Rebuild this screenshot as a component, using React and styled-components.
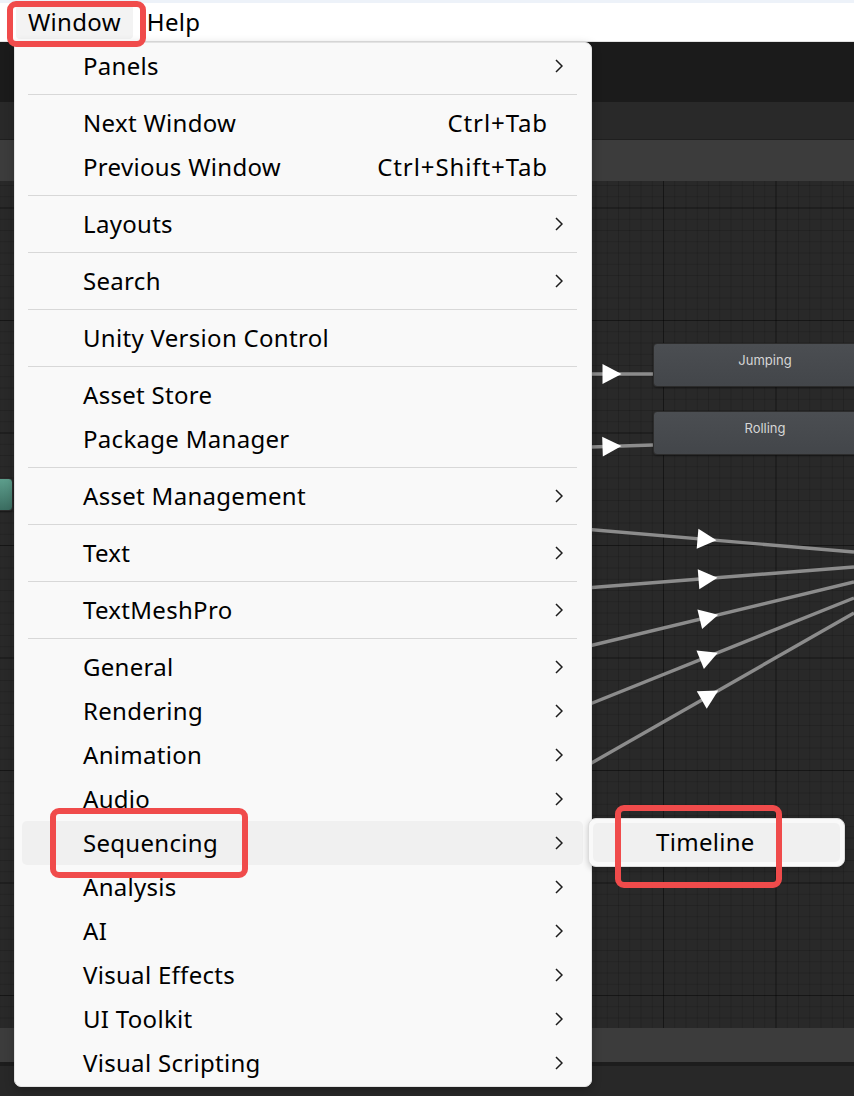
import React from 'react';
import styled, { createGlobalStyle } from 'styled-components';

const GlobalStyle = createGlobalStyle`
  html, body { margin: 0; padding: 0; background: #282828; }
  body { font-family: "Noto Sans", "Noto Sans CJK SC", sans-serif; }
  * { box-sizing: border-box; }
`;

const Screen = styled.div`
  position: relative;
  width: 854px;
  height: 1096px;
  overflow: hidden;
  display: flex;
  flex-direction: column;
  font-family: "Noto Sans", "Noto Sans CJK SC", sans-serif;
`;

const TopBar = styled.div`
  height: 42px;
  flex: none;
  display: flex;
  align-items: center;
  gap: 2px;
  padding-left: 16px;
  background: #ffffff;
  border-top: 3px solid #edf2f9;
  border-bottom: 1px solid #e2e2e2;
`;

const MenuTitle = styled.div`
  height: 34px;
  display: flex;
  align-items: center;
  padding: 0 12px 2px;
  font-size: 24px;
  letter-spacing: 0.3px;
  color: #000;
  border-radius: 4px;
  background: ${(p) => (p.$open ? '#f3f3f3' : 'transparent')};
`;

const Band = styled.div`
  flex: none;
  height: ${(p) => p.$h}px;
  background: ${(p) => p.$bg};
  border-bottom: ${(p) => (p.$line ? `1px solid ${p.$line}` : 'none')};
`;

const Canvas = styled.div`
  position: relative;
  flex: 1;
  background-color: #292929;
  background-image:
    linear-gradient(to right, rgba(0, 0, 0, 0.38) 1px, transparent 1px),
    linear-gradient(to bottom, rgba(0, 0, 0, 0.38) 1px, transparent 1px),
    linear-gradient(to right, rgba(0, 0, 0, 0.14) 1px, transparent 1px),
    linear-gradient(to bottom, rgba(0, 0, 0, 0.14) 1px, transparent 1px);
  background-size: 112.5px 112.5px, 112.5px 112.5px, 11.25px 11.25px, 11.25px 11.25px;
  background-position: 100.5px 26.5px, 100.5px 26.5px, 100.5px 26.5px, 100.5px 26.5px;
`;

const StateNode = styled.div`
  position: absolute;
  left: ${(p) => p.$x}px;
  top: ${(p) => p.$y}px;
  width: ${(p) => p.$w}px;
  height: ${(p) => p.$h}px;
  border-radius: 4px;
  border: 1px solid #2c2c2c;
  background: ${(p) =>
    p.$teal
      ? 'linear-gradient(to bottom, #5d9e8c, #3b6d61)'
      : 'linear-gradient(to bottom, #4b4e52, #43464a)'};
  box-shadow: 0 1px 2px rgba(0, 0, 0, 0.4);
  color: #d6d6d6;
  font-family: Inter, "Open Sans", sans-serif;
  font-size: 13px;
  line-height: 16px;
  text-align: center;
  padding-top: 8px;
`;

const EdgeLayer = styled.svg`
  position: absolute;
  left: 0;
  top: 0;
  pointer-events: none;
`;

const Dropdown = styled.div`
  position: absolute;
  left: 14px;
  top: 42px;
  width: 578px;
  padding: 1px 8px 1px 7px;
  background: #f9f9f9;
  border: 1px solid #e3e3e3;
  border-radius: 0 7px 7px 7px;
  box-shadow: 0 3px 10px rgba(0, 0, 0, 0.25);
  display: flex;
  flex-direction: column;
`;

const Row = styled.div`
  height: 44px;
  display: flex;
  align-items: center;
  padding: 0 20px 2px 61px;
  border-radius: 5px;
  font-size: 24px;
  letter-spacing: 0.3px;
  color: #000;
  white-space: nowrap;
  background: ${(p) => (p.$active ? '#f0f0f0' : 'transparent')};
`;

const Label = styled.span`
  flex: 1;
`;

const Shortcut = styled.span`
  margin-right: 7px;
  letter-spacing: 0.9px;
`;

const ChevronSlot = styled.span`
  width: 8px;
  height: 14px;
  display: flex;
  align-items: center;
  margin-top: 2px;
`;

const Separator = styled.div`
  height: 1px;
  margin: 6px 6px;
  background: #d8d8d8;
`;

const Submenu = styled.div`
  position: absolute;
  left: 588px;
  top: 818px;
  width: 257px;
  padding: 4px;
  background: #f9f9f9;
  border: 1px solid #dcdcdc;
  border-radius: 8px;
  box-shadow: 0 2px 6px rgba(0, 0, 0, 0.2);
`;

const SubRow = styled.div`
  height: 39px;
  display: flex;
  align-items: center;
  padding: 0 0 2px 63px;
  border-radius: 5px;
  background: #f0f0f0;
  font-size: 24px;
  letter-spacing: 0.3px;
  color: #000;
`;

const Callout = styled.div`
  position: absolute;
  left: ${(p) => p.$x}px;
  top: ${(p) => p.$y}px;
  width: ${(p) => p.$w}px;
  height: ${(p) => p.$h}px;
  border: 6px solid #f04b4b;
  border-radius: 9px;
  pointer-events: none;
`;

const Chevron = () => (
  <svg width="8" height="14" viewBox="0 0 8 14">
    <polyline points="1,1 7,7 1,13" fill="none" stroke="#1c1c1c" strokeWidth="1.5" />
  </svg>
);

const MENU = [
  { label: 'Panels', sub: true },
  'sep',
  { label: 'Next Window', shortcut: 'Ctrl+Tab' },
  { label: 'Previous Window', shortcut: 'Ctrl+Shift+Tab' },
  'sep',
  { label: 'Layouts', sub: true },
  'sep',
  { label: 'Search', sub: true },
  'sep',
  { label: 'Unity Version Control' },
  'sep',
  { label: 'Asset Store' },
  { label: 'Package Manager' },
  'sep',
  { label: 'Asset Management', sub: true },
  'sep',
  { label: 'Text', sub: true },
  'sep',
  { label: 'TextMeshPro', sub: true },
  'sep',
  { label: 'General', sub: true },
  { label: 'Rendering', sub: true },
  { label: 'Animation', sub: true },
  { label: 'Audio', sub: true },
  { label: 'Sequencing', sub: true, active: true },
  { label: 'Analysis', sub: true },
  { label: 'AI', sub: true },
  { label: 'Visual Effects', sub: true },
  { label: 'UI Toolkit', sub: true },
  { label: 'Visual Scripting', sub: true },
];

// graph edges in page coordinates: [x1, y1, x2, y2, arrowX]
const EDGES = [
  [560, 374, 653, 374, 612],
  [560, 448, 653, 445, 612],
  [560, 527, 854, 552, 707],
  [560, 590, 854, 567, 708],
  [560, 653, 854, 582, 709],
  [560, 716, 854, 598, 709],
  [560, 781, 854, 613, 710],
];

function arrowPoints(x1, y1, x2, y2, ax) {
  const dx = x2 - x1;
  const dy = y2 - y1;
  const len = Math.hypot(dx, dy);
  const ux = dx / len;
  const uy = dy / len;
  const ay = y1 + ((ax - x1) / dx) * dy;
  const L = 19;
  const H = 10;
  const tip = [ax + ux * L * 0.5, ay + uy * L * 0.5];
  const bx = ax - ux * L * 0.5;
  const by = ay - uy * L * 0.5;
  const b1 = [bx - uy * H, by + ux * H];
  const b2 = [bx + uy * H, by - ux * H];
  return [tip, b1, b2].map((p) => p.join(',')).join(' ');
}

export default function App() {
  return (
    <>
      <GlobalStyle />
      <Screen>
        <TopBar>
          <MenuTitle $open>Window</MenuTitle>
          <MenuTitle>Help</MenuTitle>
        </TopBar>
        <Band $h={60} $bg="#1b1b1b" />
        <Band $h={38} $bg="#292929" $line="#1f1f1f" />
        <Band $h={41} $bg="#3c3c3c" />
        <Canvas>
          <StateNode $teal $x={-100} $y={297} $w={113} $h={33} />
          <EdgeLayer width="854" height="848" viewBox="0 181 854 848">
            {EDGES.map(([x1, y1, x2, y2, ax], i) => (
              <g key={i}>
                <line x1={x1} y1={y1} x2={x2} y2={y2} stroke="#8c8c8c" strokeWidth="3.4" />
                <polygon points={arrowPoints(x1, y1, x2, y2, ax)} fill="#ffffff" />
              </g>
            ))}
          </EdgeLayer>
          <StateNode $x={653} $y={162} $w={224} $h={44}>Jumping</StateNode>
          <StateNode $x={653} $y={230} $w={224} $h={44}>Rolling</StateNode>
        </Canvas>
        <Band $h={34} $bg="#3c3c3c" />
        <Band $h={4} $bg="#1d1d1d" />
        <Band $h={30} $bg="#282828" />

        <Dropdown>
          {MENU.map((item, i) =>
            item === 'sep' ? (
              <Separator key={i} />
            ) : (
              <Row key={i} $active={item.active}>
                <Label>{item.label}</Label>
                {item.shortcut && <Shortcut>{item.shortcut}</Shortcut>}
                <ChevronSlot>{item.sub && <Chevron />}</ChevronSlot>
              </Row>
            )
          )}
        </Dropdown>

        <Submenu>
          <SubRow>Timeline</SubRow>
        </Submenu>

        <Callout $x={7} $y={1} $w={139} $h={46} />
        <Callout $x={50} $y={808} $w={198} $h={70} />
        <Callout $x={615} $y={805} $w={167} $h={83} />
      </Screen>
    </>
  );
}
